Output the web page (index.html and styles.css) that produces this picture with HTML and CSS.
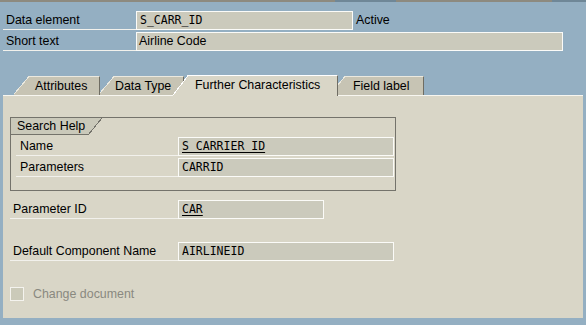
FILE: index.html
```html
<!DOCTYPE html>
<html>
<head>
<title>Data element S_CARR_ID</title>
<link rel="stylesheet" href="styles.css">
</head>
<body>
<div class="topbar">
	<span class="seg seg1"></span><span class="seg dark seg2"></span><span class="seg seg3"></span><span class="seg dark seg4"></span>
</div>
<div class="head">
	<div class="row">
		<div class="label">Data element</div>
		<div class="field mono w-elem">S_CARR_ID</div>
		<div class="status">Active</div>
	</div>
	<div class="row">
		<div class="label">Short text</div>
		<div class="field w-short">Airline Code</div>
	</div>
</div>
<div class="tabs">
	<div class="tab t-attr">Attributes</div>
	<div class="tab t-type">Data Type</div>
	<div class="tab t-further active">Further Characteristics</div>
	<div class="tab t-label">Field label</div>
</div>
<div class="panel">
	<div class="group">
		<div class="group-title">Search Help</div>
		<div class="group-rows">
			<div class="row">
				<div class="label">Name</div>
				<div class="field mono w-std"><span class="link">S_CARRIER_ID</span></div>
			</div>
			<div class="row">
				<div class="label">Parameters</div>
				<div class="field mono w-std">CARRID</div>
			</div>
		</div>
	</div>
	<div class="row r-param">
		<div class="label">Parameter ID</div>
		<div class="field mono w-param"><span class="link">CAR</span></div>
	</div>
	<div class="row r-comp">
		<div class="label">Default Component Name</div>
		<div class="field mono w-std">AIRLINEID</div>
	</div>
	<div class="check">
		<span class="box"></span>
		<span class="check-text">Change document</span>
	</div>
</div>
</body>
</html>
```
FILE: styles.css
```css
html,body{
	margin:0;
	padding:0;
}
body{
	background-color:#94afc2;
	font-family:"Liberation Sans",Arial,sans-serif;
	font-size:12.4px;
	color:#000000;
	width:586px;
	height:325px;
	overflow:hidden;
}
.topbar{
	display:flex;
	height:2px;
}
.seg{
	display:block;
	height:2px;
	background-color:#8d8a7f;
}
.seg.dark{
	background-color:#6f8797;
}
.seg1{width:335px;}
.seg2{width:61px;}
.seg3{width:156px;}
.seg4{flex:1;}

.head{
	padding-top:9px;
	display:flex;
	flex-direction:column;
	gap:2px;
}
.row{
	display:flex;
	align-items:stretch;
	height:19px;
}
.label{
	box-sizing:border-box;
	border-bottom:1px solid #f2f1ec;
	padding-left:3px;
	line-height:18px;
	white-space:nowrap;
}
.head .label{
	width:133px;
	margin-left:3px;
}
.field{
	box-sizing:border-box;
	height:19px;
	border:1px solid #fbfbf8;
	background-color:#cbcabc;
	padding-left:2px;
	line-height:17px;
	white-space:nowrap;
}
.mono{
	font-family:"DejaVu Sans Mono","Liberation Mono",monospace;
	font-size:11.5px;
	padding-left:3px;
}
.link{
	text-decoration:underline;
	text-underline-offset:2px;
	text-decoration-skip-ink:none;
}
.w-elem{width:217px;}
.w-short{width:427px;}
.w-std{width:216px;}
.w-param{width:146px;}
.status{
	margin-left:3px;
	line-height:18px;
}

/* tab strip */
.tabs{
	display:flex;
	align-items:flex-end;
	height:20px;
	margin-top:24px;
	padding-left:30px;
}
.tab{
	position:relative;
	box-sizing:border-box;
	height:19px;
	line-height:18px;
	background-color:#c7c4b4;
	border-top:1px solid #ebe9df;
	border-right:1px solid #6f6d63;
	white-space:nowrap;
}
.tab::before{
	content:"";
	position:absolute;
	left:-16px;
	top:-1px;
	bottom:0;
	width:16px;
	background:linear-gradient(to bottom right,transparent calc(50% - 1px),#ebe9df calc(50% - 1px),#ebe9df 50%,#c7c4b4 50%);
}
.tab.active{
	height:21px;
	margin-bottom:-1px;
	line-height:19px;
	background-color:#d9d6c7;
	border-top-color:#ffffff;
}
.tab.active::before{
	background:linear-gradient(to bottom right,transparent calc(50% - 1px),#ffffff calc(50% - 1px),#ffffff 50%,#d9d6c7 50%);
}
.t-attr{width:70px;padding-left:5px;z-index:3;}
.t-type{width:69px;margin-left:15px;z-index:2;}
.t-further{width:149px;margin-left:5px;padding-left:6px;z-index:5;}
.t-label{width:78px;margin-left:8px;padding-left:7px;z-index:1;}

/* panel */
.panel{
	box-sizing:border-box;
	height:223px;
	margin-left:3px;
	width:580px;
	background-color:#d9d6c7;
	border-top:1px solid #f7f6f0;
	padding:21px 0 0 7px;
}
.group{
	box-sizing:border-box;
	width:386px;
	border:1px solid #74736b;
	padding-bottom:13px;
}
.group-title{
	position:relative;
	box-sizing:border-box;
	width:77px;
	height:17px;
	line-height:16px;
	padding-left:6px;
	background-color:#cac9ba;
	border-bottom:1px solid #74736b;
}
.group-title::after{
	content:"";
	position:absolute;
	right:-14px;
	top:0;
	bottom:-1px;
	width:14px;
	background:linear-gradient(to bottom right,#cac9ba calc(50% - 0.5px),#74736b calc(50% - 0.5px),#74736b calc(50% + 0.5px),transparent calc(50% + 0.5px));
}
.group-rows{
	margin-top:2px;
	padding-left:5px;
	display:flex;
	flex-direction:column;
	gap:2px;
}
.group .label{
	width:162px;
	padding-left:4px;
}
.panel > .row .label{
	width:168px;
}
.r-param{margin-top:9px;}
.r-comp{margin-top:23px;}
.check{
	display:flex;
	align-items:center;
	height:14px;
	margin-top:26px;
}
.box{
	box-sizing:border-box;
	width:14px;
	height:14px;
	border:1px solid #f4f3ee;
	background-color:#cbcab9;
}
.check-text{
	margin-left:9px;
	color:#8a8980;
}
```
